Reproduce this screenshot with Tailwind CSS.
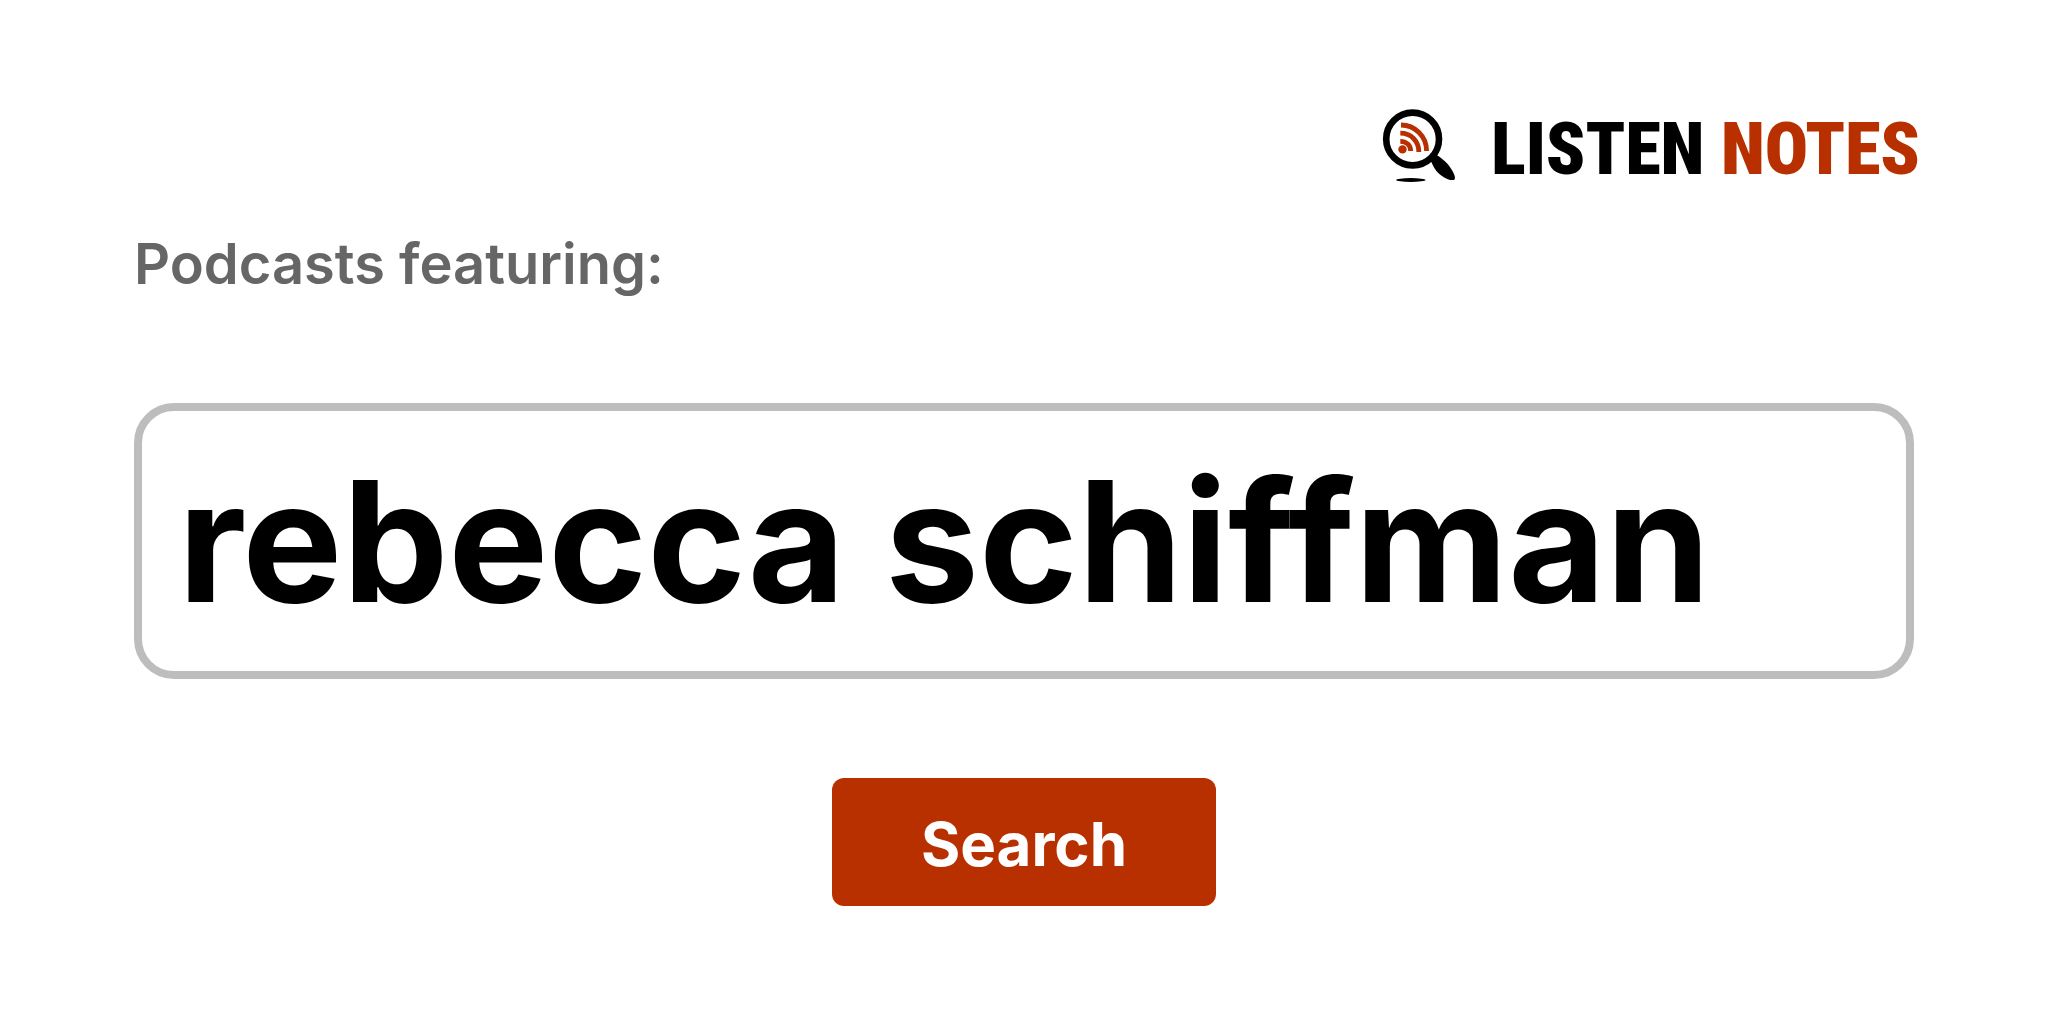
<!DOCTYPE html>
<html lang="en">
<head>
    <meta charset="UTF-8">
    <meta name="viewport" content="width=device-width, initial-scale=1.0">
    <title>Podcasts featuring: rebecca schiffman</title>
    <script src="https://cdn.jsdelivr.net/npm/@tailwindcss/browser@4"></script>
</head>
<body class="min-h-screen bg-white font-['Inter',sans-serif] text-black">
    <header class="flex justify-end pt-24 pr-32">
        <a href="#" class="flex items-start gap-8">
            <!-- magnifier with feed waves -->
            <svg class="h-24 w-20" viewBox="10 1 80 96" fill="none" aria-hidden="true">
                <circle cx="43.6" cy="44" r="26.4" stroke="#000" stroke-width="6.6"/>
                <path d="M61.5 65 L67.5 60 C73 63.5 79 68 83.5 76 C86 80.5 87 84.5 84.5 85 C79 86 71 80.5 67 75.5 C64.5 72 63 68.5 61.5 65Z" fill="#000"/>
                <ellipse cx="41.8" cy="85" rx="14.7" ry="1.9" fill="#000"/>
                <circle cx="33.5" cy="54.4" r="4.2" fill="#b93000"/>
                <g stroke="#b93000" stroke-width="4.8">
                    <path d="M31.3 46.3 C37.5 46.3 41.7 50.5 41.7 56"/>
                    <path d="M31.3 38.2 C42 38.2 49.8 46 49.8 57"/>
                    <path d="M32 30 C46 30 57.6 41.5 57.6 56"/>
                </g>
            </svg>
            <span class="pt-1.5 font-['Roboto_Condensed','Roboto',sans-serif] text-[72px] leading-24 font-black whitespace-nowrap">LISTEN <span class="text-[#b93000]">NOTES</span></span>
        </a>
    </header>
    <main class="px-[134px]">
        <form onsubmit="return false">
            <label for="query" class="mt-[30px] block text-[56px] leading-[72px] font-semibold text-[#666]">Podcasts featuring:</label>
            <input id="query" type="text" value="rebecca schiffman" class="mt-[103px] block h-[276px] w-full rounded-[40px] border-8 border-[#bdbdbd] px-9 text-[168px] font-bold outline-none">
            <button type="submit" class="mx-auto mt-[99px] block h-32 w-96 rounded-xl bg-[#b93000] pt-1 text-[60px] font-bold text-white">Search</button>
        </form>
    </main>
</body>
</html>
